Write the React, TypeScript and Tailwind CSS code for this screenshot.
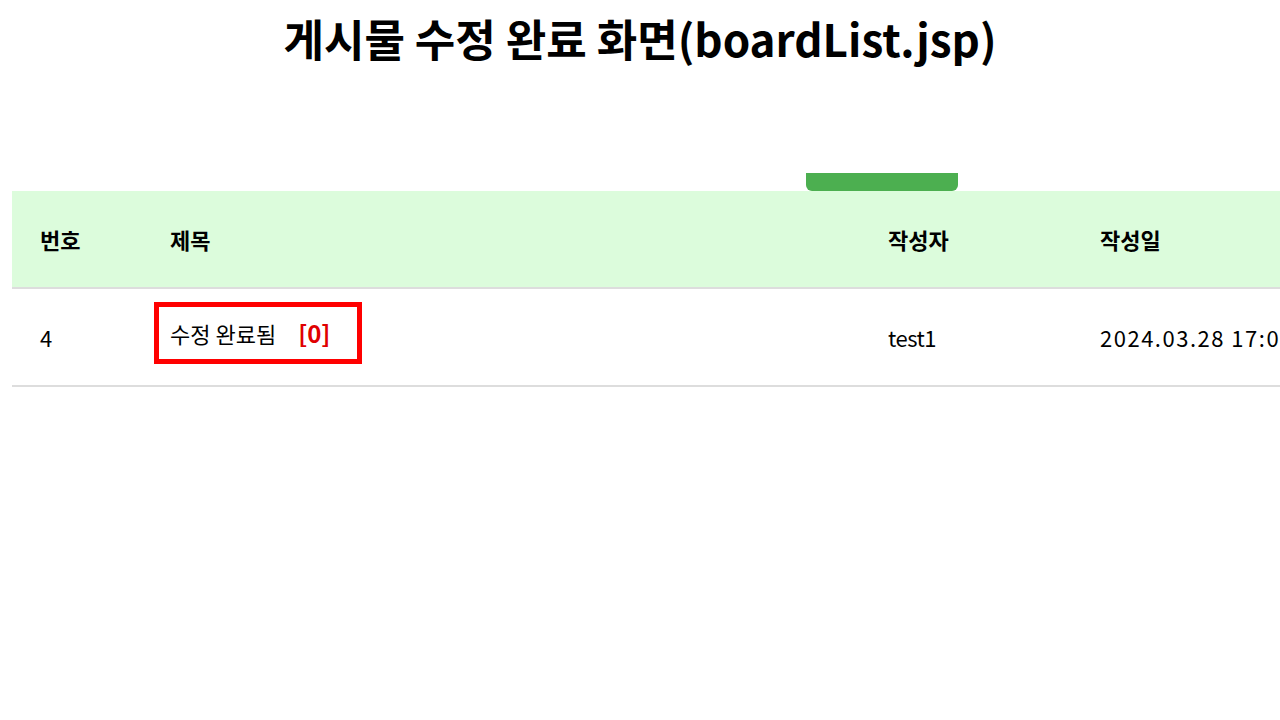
const columns = [
  { label: "번호", width: "w-[128px]", pad: "pl-[28px]" },
  { label: "제목", width: "w-[718px]", pad: "pl-[30px]" },
  { label: "작성자", width: "w-[212px]", pad: "pl-[30px]" },
  { label: "작성일", width: "w-[300px]", pad: "pl-[30px]" },
];

export default function App() {
  return (
    <div
      className="w-[1280px] h-[720px] overflow-hidden bg-white text-black"
      style={{ fontFamily: '"Noto Sans CJK KR", "Noto Sans", sans-serif' }}
    >
      <h1 className="pt-[8px] text-center text-[44px] font-bold leading-[60px]">
        게시물 수정 완료 화면(boardList.jsp)
      </h1>

      <div className="mt-[105px] pl-[12px]">
        <div className="flex pl-[794px]">
          <div className="w-[152px] h-[18px] rounded-b-[6px] bg-[#4caf50]" />
        </div>
        <div className="w-[1400px]">
          <div className="flex h-[98px] items-center bg-[#dcfcdc] border-b-2 border-[#dddddd] text-[22px] font-bold">
            {columns.map((c) => (
              <div key={c.label} className={`${c.width} ${c.pad}`}>
                {c.label}
              </div>
            ))}
          </div>
          <div className="flex h-[98px] items-center border-b-2 border-[#dddddd] text-[22px]">
            <div className="w-[128px] pl-[28px]">4</div>
            <div className="w-[718px] pl-[14px]">
              <div className="inline-flex items-center h-[62px] w-[208px] mb-[8px] border-[5px] border-[#ff0000] pl-[11px]">
                <span>수정 완료됨</span>
                <span className="ml-[22px] text-[24px] font-bold text-[#e00000]">[0]</span>
              </div>
            </div>
            <div className="w-[212px] pl-[30px] tracking-[-0.5px]">test1</div>
            <div className="w-[300px] pl-[30px] whitespace-nowrap tracking-[1.5px]">2024.03.28 17:08</div>
          </div>
        </div>
      </div>
    </div>
  );
}
